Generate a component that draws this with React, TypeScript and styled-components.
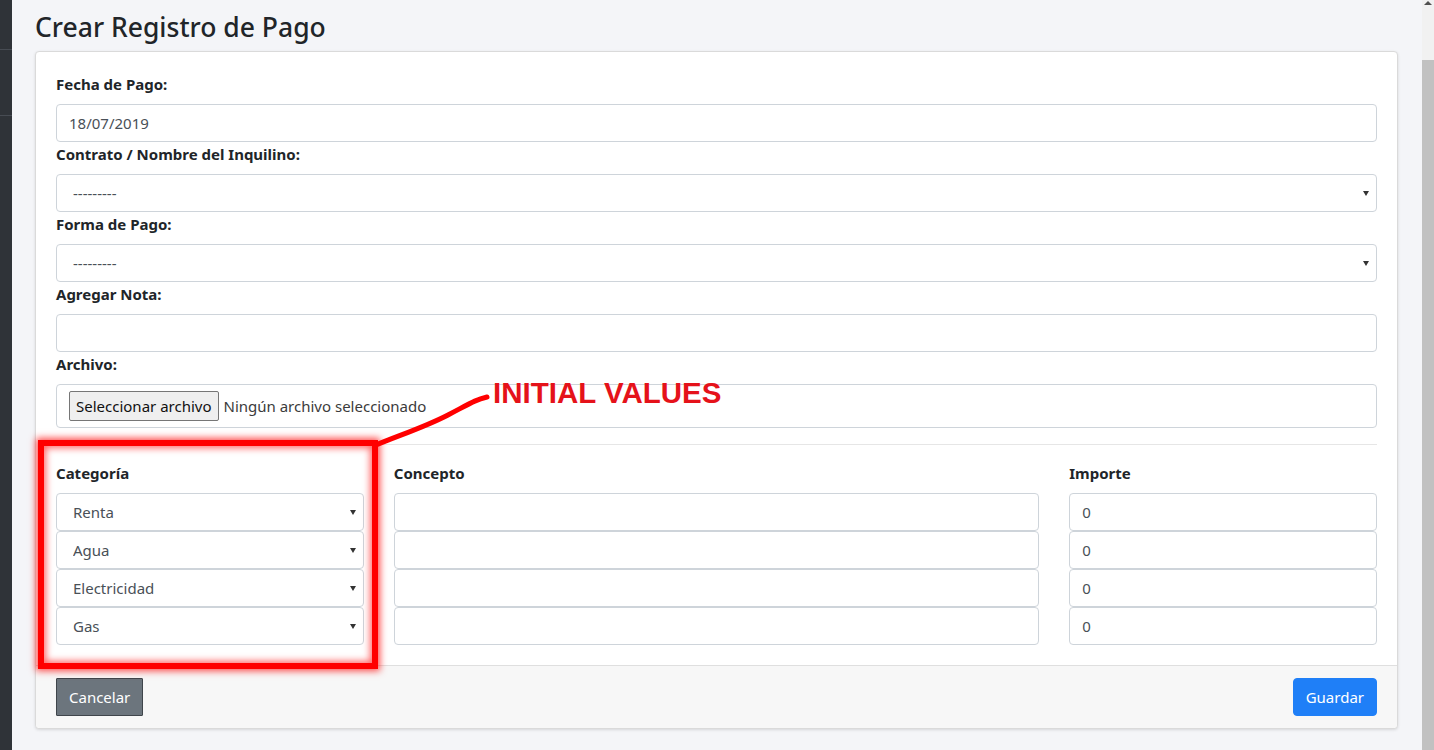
import React from 'react';
import styled, { createGlobalStyle } from 'styled-components';

const GlobalStyle = createGlobalStyle`
  html, body {
    margin: 0;
    padding: 0;
    overflow: hidden;
  }
  body {
    font-family: "Noto Sans", "Open Sans", sans-serif;
    color: #212529;
  }
  * {
    box-sizing: border-box;
  }
`;

const Shell = styled.div`
  position: relative;
  display: flex;
  height: 750px;
  width: 1434px;
`;

const Sidebar = styled.aside`
  width: 12px;
  background: #2f3338;
  display: flex;
  flex-direction: column;
`;

const SidebarBlock = styled.div<{ h: number }>`
  height: ${p => p.h}px;
  border-bottom: 1px solid #474c53;
`;

const Main = styled.main`
  flex: 1;
  background: #f4f5f8;
  padding: 10px 24px 0 23px;
`;

const Scrollbar = styled.div`
  width: 12px;
  background: #f1f1f1;
  display: flex;
  flex-direction: column;
  align-items: center;
`;

const ScrollArrow = styled.div`
  width: 0;
  height: 0;
  border-left: 4px solid transparent;
  border-right: 4px solid transparent;
  border-bottom: 4px solid #505050;
  margin-top: 1px;
`;

const ScrollThumb = styled.div`
  margin-top: 55px;
  width: 12px;
  flex: 1;
  background: #c1c1c1;
`;

const PageTitle = styled.h1`
  font-size: 26.5px;
  font-weight: 500;
  line-height: 34px;
  margin: 0 0 7px 0;
  color: #212529;
`;

const Card = styled.section`
  background: #fff;
  border: 1px solid #dadada;
  border-radius: 4px;
  box-shadow: 0 1px 3px rgba(0, 0, 0, 0.12);
`;

const CardBody = styled.div`
  padding: 20px;
`;

const Label = styled.label`
  display: block;
  font-size: 15px;
  font-weight: 700;
  line-height: 24px;
  margin-bottom: 8px;
  color: #212529;
`;

const TextInput = styled.input`
  display: block;
  width: 100%;
  height: 38px;
  padding: 6px 12px;
  border: 1px solid #ced4da;
  border-radius: 4px;
  font-family: inherit;
  font-size: 15px;
  color: #495057;
  background: #fff;
  outline: none;
`;

const SelectWrap = styled.div`
  position: relative;
  width: 100%;

  &::after {
    content: '';
    position: absolute;
    right: 8px;
    top: 17px;
    border-left: 3.5px solid transparent;
    border-right: 3.5px solid transparent;
    border-top: 5px solid #333;
    pointer-events: none;
  }
`;

const Select = styled.select`
  display: block;
  width: 100%;
  height: 38px;
  padding: 6px 12px 6px 16px;
  border: 1px solid #ced4da;
  border-radius: 4px;
  font-family: inherit;
  font-size: 15px;
  color: #495057;
  background: #fff;
  appearance: none;
  outline: none;
`;

const FileBox = styled.div`
  display: flex;
  align-items: center;
  gap: 5px;
  height: 44px;
  padding: 0 12px;
  border: 1px solid #ced4da;
  border-radius: 4px;
`;

const FileButton = styled.button`
  height: 30px;
  padding: 0 6px;
  background: #efefef;
  border: 1px solid #767676;
  border-radius: 2px;
  font-family: inherit;
  font-size: 15px;
  color: #111;
`;

const FileName = styled.span`
  font-size: 15px;
  color: #3b3b3b;
`;

const Divider = styled.hr`
  margin: 16px 0;
  border: 0;
  border-top: 1px solid #e6e6e6;
`;

const ItemsGrid = styled.div`
  display: grid;
  grid-template-columns: calc(25% - 22.5px) 1fr calc(25% - 22.5px);
  column-gap: 30px;
`;

const Column = styled.div`
  display: flex;
  flex-direction: column;
`;

const CardFooter = styled.footer`
  display: flex;
  justify-content: space-between;
  padding: 12px 20px;
  background: #f7f7f7;
  border-top: 1px solid #dfdfdf;
  border-radius: 0 0 4px 4px;
`;

const Button = styled.button<{ variant: 'secondary' | 'primary' }>`
  height: 38px;
  padding: 0 12px;
  font-family: inherit;
  font-size: 15px;
  color: #fff;
  background: ${p => (p.variant === 'primary' ? '#1f7ff7' : '#6c757d')};
  border: 1px solid ${p => (p.variant === 'primary' ? '#1f7ff7' : '#3f454b')};
  border-radius: ${p => (p.variant === 'primary' ? '4px' : '1px')};
`;

// red marker drawn over the screenshot
const MarkerBox = styled.div`
  position: absolute;
  left: 38px;
  top: 440px;
  width: 340px;
  height: 229px;
  border: 6px solid #ff0000;
  box-shadow: 0 0 7px 2px rgba(255, 0, 0, 0.7), inset 0 0 7px 2px rgba(255, 0, 0, 0.6);
  filter: blur(0.6px);
  pointer-events: none;
`;

const MarkerLine = styled.svg`
  position: absolute;
  left: 370px;
  top: 385px;
  pointer-events: none;
  overflow: visible;
`;

const MarkerText = styled.div`
  position: absolute;
  left: 493px;
  top: 377px;
  font-family: "Liberation Sans", Arial, sans-serif;
  font-weight: 700;
  font-size: 29.5px;
  line-height: 32px;
  color: #e5121a;
  white-space: nowrap;
`;

const categories = ['Renta', 'Agua', 'Electricidad', 'Gas'];

export default function App() {
  return (
    <>
      <GlobalStyle />
      <Shell>
        <Sidebar>
          <SidebarBlock h={50} />
          <SidebarBlock h={66} />
        </Sidebar>
        <Main>
          <PageTitle>Crear Registro de Pago</PageTitle>
          <Card>
            <CardBody>
              <Label>Fecha de Pago:</Label>
              <TextInput defaultValue="18/07/2019" />

              <Label>Contrato / Nombre del Inquilino:</Label>
              <SelectWrap>
                <Select defaultValue="">
                  <option value="">---------</option>
                </Select>
              </SelectWrap>

              <Label>Forma de Pago:</Label>
              <SelectWrap>
                <Select defaultValue="">
                  <option value="">---------</option>
                </Select>
              </SelectWrap>

              <Label>Agregar Nota:</Label>
              <TextInput defaultValue="" />

              <Label>Archivo:</Label>
              <FileBox>
                <FileButton type="button">Seleccionar archivo</FileButton>
                <FileName>Ningún archivo seleccionado</FileName>
              </FileBox>

              <Divider />

              <ItemsGrid>
                <Column>
                  <Label>Categoría</Label>
                  {categories.map(c => (
                    <SelectWrap key={c}>
                      <Select defaultValue={c}>
                        <option value={c}>{c}</option>
                      </Select>
                    </SelectWrap>
                  ))}
                </Column>
                <Column>
                  <Label>Concepto</Label>
                  {categories.map(c => (
                    <TextInput key={c} defaultValue="" />
                  ))}
                </Column>
                <Column>
                  <Label>Importe</Label>
                  {categories.map(c => (
                    <TextInput key={c} defaultValue="0" />
                  ))}
                </Column>
              </ItemsGrid>
            </CardBody>
            <CardFooter>
              <Button variant="secondary">Cancelar</Button>
              <Button variant="primary">Guardar</Button>
            </CardFooter>
          </Card>
        </Main>
        <Scrollbar>
          <ScrollArrow />
          <ScrollThumb />
        </Scrollbar>

        <MarkerBox />
        <MarkerLine width="130" height="70">
          <path
            d="M6 60 C 30 50, 55 42, 78 30 S 105 15, 117 12"
            fill="none"
            stroke="#ff0000"
            strokeWidth="5"
            strokeLinecap="round"
          />
        </MarkerLine>
        <MarkerText>INITIAL VALUES</MarkerText>
      </Shell>
    </>
  );
}
